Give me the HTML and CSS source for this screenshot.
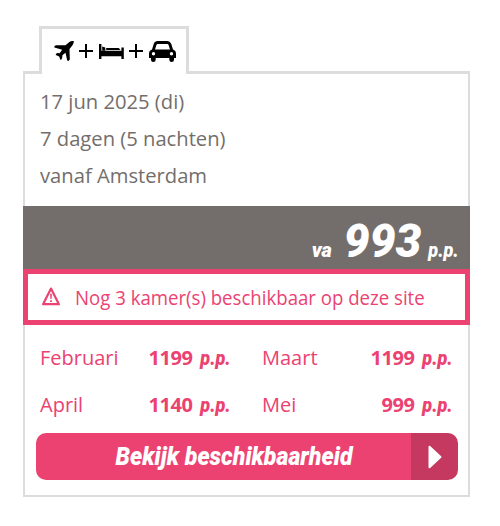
FILE: index.html
```html
<!DOCTYPE html>
<html lang="nl">
<head>
  <meta charset="UTF-8" />
  <meta name="viewport" content="width=device-width, initial-scale=1.0" />
  <title>Prijs en beschikbaarheid</title>
  <link rel="stylesheet" href="styles.css">
</head>
<body>

  <div class="price-box">
    <div class="tab-row">
      <div class="tab-line-left"></div>
      <div class="tab">
        <svg viewBox="0 0 20 20" width="20" height="20">
          <path d="M0.2 5.4L1.8 4.2L11.5 4.3L15.4 1Q17.6 -0.4 19.8 0.1Q20 2.2 18.5 4.2L15.5 8L15.8 18.4L14.5 20L13.2 19.6L11.5 11.8L8.4 14.2L8.2 17L7 18.9L6.2 18.6L5.2 15.6L1.8 14L1.9 13L3.2 12L5.6 12.2L8.2 8.8L0.4 6.6Z"/>
        </svg>
        <span class="plus"></span>
        <svg viewBox="0 0 25 15" width="25" height="15">
          <path d="M0 0H2.4V6.8H22.4V3.5H24.8V15H22.4V12.2H2.4V15H0Z"/>
          <path d="M3.2 2.4L6.2 3.4L6.4 6.8H3.2Z"/>
          <path d="M7.2 4H19.8L21.4 6H7.2Z"/>
        </svg>
        <span class="plus"></span>
        <svg viewBox="0 0 27 21" width="27" height="21">
          <path fill-rule="evenodd" d="M3 8.4L4.8 2.8Q5.8 0 8.7 0H18.3Q21.2 0 22.2 2.8L24 8.4Q27 9.6 27 12.4V17H25V18.8Q25 21 22.7 21Q20.3 21 20.3 18.8V17H6.7V18.8Q6.7 21 4.3 21Q2 21 2 18.8V17H0V12.4Q0 9.6 3 8.4ZM6 8.4H21L19.6 4.1Q19.2 3 18.2 3H8.8Q7.8 3 7.4 4.1ZM4.5 11.1A1.7 1.7 0 1 0 4.5 14.5A1.7 1.7 0 1 0 4.5 11.1ZM22.5 11.1A1.7 1.7 0 1 0 22.5 14.5A1.7 1.7 0 1 0 22.5 11.1Z"/>
        </svg>
      </div>
      <div class="tab-line-right"></div>
    </div>

    <div class="trip">
      <p>17 jun 2025 (di)</p>
      <p>7 dagen (5 nachten)</p>
      <p>vanaf Amsterdam</p>
    </div>

    <div class="price">
      <span class="va">va</span>
      <span class="amount">993</span>
      <span class="pp">p.p.</span>
    </div>

    <div class="alert">
      <svg viewBox="0 0 20 20" width="20" height="20">
        <path d="M10 1.6L17.9 17.2H2.1Z" fill="none" stroke="#eb4272" stroke-width="2.2" stroke-linejoin="round"/>
        <path d="M9.1 6.8H10.9L10.6 12H9.4ZM9.1 13.2H10.9V15H9.1Z" fill="#eb4272"/>
      </svg>
      <span>Nog 3 kamer(s) beschikbaar op deze site</span>
    </div>

    <div class="months">
      <a href="#" class="month"><span>Februari</span><b>1199 <i>p.p.</i></b></a>
      <a href="#" class="month"><span>Maart</span><b>1199 <i>p.p.</i></b></a>
      <a href="#" class="month"><span>April</span><b>1140 <i>p.p.</i></b></a>
      <a href="#" class="month"><span>Mei</span><b>999 <i>p.p.</i></b></a>
    </div>

    <a href="#" class="button">
      <span class="button-text"><span>Bekijk beschikbaarheid</span></span>
      <span class="button-arrow">
        <svg viewBox="0 0 14 24" width="14" height="24">
          <path d="M1.5 1.8V22.2L12.5 12Z" fill="#fff" stroke="#fff" stroke-width="2" stroke-linejoin="round"/>
        </svg>
      </span>
    </a>
  </div>

</body>
</html>
```

FILE: styles.css
```css
* {
  box-sizing: border-box;
}

body {
  margin: 0;
  background-color: #fff;
  font-family: 'Open Sans', sans-serif;
  font-size: 20.2px;
  color: #736e6b;
}

a {
  color: inherit;
  text-decoration: none;
}

.price-box {
  width: 447px;
  height: 471px;
  margin: 26px 0 0 23px;
}

/* tab with the travel icons */
.tab-row {
  display: flex;
  height: 48px;
  align-items: flex-end;
}

.tab-line-left {
  width: 16px;
  height: 3px;
  background-color: #dcdcdc;
}

.tab-line-right {
  flex: 1;
  height: 3px;
  background-color: #dcdcdc;
}

.tab {
  display: flex;
  align-items: center;
  width: 150px;
  height: 48px;
  padding: 0 0 1px 12px;
  border: 3px solid #dcdcdc;
  border-bottom: none;
}

.tab svg {
  fill: #000;
}

.plus {
  width: 14px;
  height: 14px;
  margin: 0 6px 0 5px;
  background:
    linear-gradient(#000, #000) center / 14px 2px no-repeat,
    linear-gradient(#000, #000) center / 2px 14px no-repeat;
}

.trip {
  height: 132px;
  padding: 9px 15px 0;
  border: solid #dcdcdc;
  border-width: 0 2px;
}

.trip p {
  height: 37px;
  margin: 0;
  line-height: 37px;
}

/* price bar */
.price {
  display: flex;
  align-items: baseline;
  justify-content: flex-end;
  height: 63px;
  padding-right: 11px;
  background-color: #736e6b;
  color: #fff;
  font-family: Roboto, sans-serif;
  font-weight: 900;
  font-style: italic;
  line-height: 71px;
}

.va {
  font-size: 20px;
}

.amount {
  margin: 0 4px 0 12px;
  font-size: 46px;
}

.pp {
  font-size: 20px;
  transform: scaleX(0.9);
  transform-origin: right;
}

.alert {
  display: flex;
  align-items: center;
  height: 56px;
  padding-left: 13px;
  border: 5px solid #eb4272;
  color: #eb4272;
  font-size: 19.6px;
  white-space: nowrap;
}

.alert svg {
  flex: none;
}

.alert span {
  margin-left: 14px;
  transform: scaleX(0.95);
  transform-origin: left;
}

/* prices per month */
.months {
  display: grid;
  grid-template-columns: 191px 191px;
  grid-auto-rows: 47px;
  column-gap: 31px;
  height: 108px;
  padding: 9px 15px 0;
  border: solid #dcdcdc;
  border-width: 0 2px;
  color: #eb4272;
  font-size: 20px;
}

.month {
  display: flex;
  justify-content: space-between;
  line-height: 47px;
}

.month b {
  letter-spacing: -0.4px;
}

.month i {
  display: inline-block;
  font-family: Roboto, sans-serif;
  font-weight: 900;
  letter-spacing: 0;
  transform: scaleX(0.9);
  transform-origin: right;
}

.button {
  display: flex;
  height: 64px;
  padding: 0 10px 15px 11px;
  border: solid #dcdcdc;
  border-width: 0 2px 2px;
  color: #fff;
  font-family: Roboto, sans-serif;
  font-size: 25px;
  font-weight: 900;
  font-style: italic;
}

.button-text {
  flex: 1;
  padding-left: 22px;
  border-radius: 10px 0 0 10px;
  background-color: #eb4272;
  line-height: 47px;
  text-align: center;
}

.button-text span {
  display: inline-block;
  transform: scaleX(0.925);
}

.button-arrow {
  display: flex;
  align-items: center;
  justify-content: center;
  width: 47px;
  border-radius: 0 10px 10px 0;
  background-color: #c5385f;
}
```
